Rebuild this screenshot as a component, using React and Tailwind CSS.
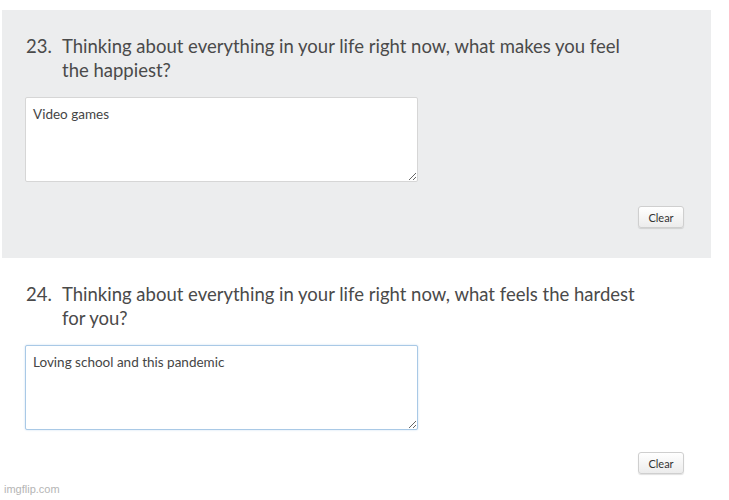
import React from "react";

function Question({ num, text, answer, bg, focused, btnGap }) {
  return (
    <div className={`${bg} h-[248px] w-[709px] pt-[24px] pl-[23px] pr-[27px] flex flex-col`}>
      <div className="flex text-[18.5px] leading-[24px] text-[#4a4a4a]">
        <span className="w-[37px] shrink-0 pl-[1px]">{num}</span>
        <span className="w-[578px]">{text}</span>
      </div>
      <textarea
        readOnly
        value={answer}
        className={`mt-[15px] w-[393px] h-[85px] bg-white rounded-[2px] border px-[7px] py-[7px] text-[13.5px] leading-[18px] text-[#454545] outline-none ${
          focused
            ? "border-[#a9c9e6] shadow-[0_0_2px_rgba(120,170,220,0.45)]"
            : "border-[#d6d6d6]"
        }`}
        style={{ fontFamily: "Lato, 'Noto Sans', sans-serif" }}
      />
      <div className={`flex justify-end ${btnGap}`}>
        <button className="w-[46px] h-[22px] rounded-[3px] border border-[#cfcfcf] bg-gradient-to-b from-white to-[#ececec] shadow-[0_1px_1px_rgba(0,0,0,0.12)] text-[11px] text-[#333] leading-none">
          Clear
        </button>
      </div>
    </div>
  );
}

export default function App() {
  return (
    <div
      className="relative w-[729px] h-[500px] bg-white overflow-hidden pt-[10px] pl-[2px]"
      style={{ fontFamily: "Lato, 'Noto Sans', sans-serif" }}
    >
      <Question
        num="23."
        text="Thinking about everything in your life right now, what makes you feel the happiest?"
        answer="Video games"
        bg="bg-[#ecedee]"
        btnGap="mt-[24px]"
      />
      <Question
        num="24."
        text="Thinking about everything in your life right now, what feels the hardest for you?"
        answer="Loving school and this pandemic"
        bg="bg-white"
        focused
        btnGap="mt-[22px]"
      />
      <div
        className="absolute left-[4px] bottom-[3px] text-[11px] text-[#b5b5b5]"
        style={{ fontFamily: "'Liberation Sans', Arial, sans-serif" }}
      >
        imgflip.com
      </div>
    </div>
  );
}
